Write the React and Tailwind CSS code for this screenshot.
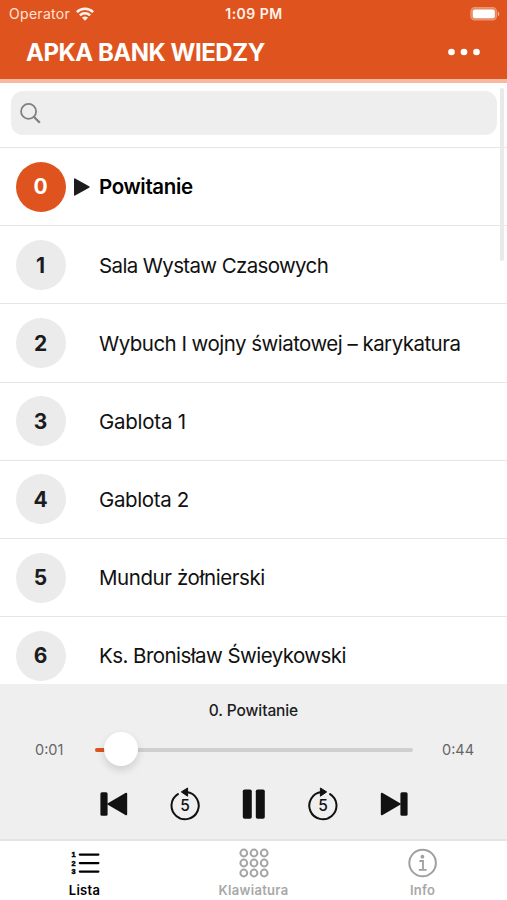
const tracks = [
  { id: 0, title: "Powitanie", spacing: "tracking-[-0.36px]" },
  { id: 1, title: "Sala Wystaw Czasowych", spacing: "tracking-[-0.64px]" },
  { id: 2, title: "Wybuch I wojny światowej – karykatura", spacing: "tracking-[-0.53px]" },
  { id: 3, title: "Gablota 1", spacing: "tracking-[-0.25px]" },
  { id: 4, title: "Gablota 2", spacing: "tracking-[-0.38px]" },
  { id: 5, title: "Mundur żołnierski", spacing: "tracking-[-0.42px]" },
  { id: 6, title: "Ks. Bronisław Świeykowski", spacing: "tracking-[-0.56px]" },
];

function WifiIcon() {
  return (
    <svg className="h-[14px] w-[18px]" viewBox="0 0 18 14" fill="none" stroke="#fff3ec" strokeWidth="2.6">
      <path d="M0.9 5.1a11.6 11.6 0 0 1 16.2 0" />
      <path d="M3.9 8.4a7.3 7.3 0 0 1 10.2 0" />
      <path d="M9 13.8 6 10.8a4.1 4.1 0 0 1 6 0z" fill="#fff3ec" stroke="none" />
    </svg>
  );
}

function BatteryIcon() {
  return (
    <svg className="h-[14px] w-[31px]" viewBox="0 0 31 14">
      <rect x="0.9" y="0.7" width="25.6" height="12.2" rx="3.8" fill="#e9855c" stroke="#eb9673" strokeWidth="1.2" />
      <rect x="2.8" y="2.4" width="22" height="8.8" rx="2" fill="#fff" />
      <path d="M27.9 4.4c1.9.8 1.9 4 0 4.8z" fill="#f3b294" />
    </svg>
  );
}

function Header() {
  return (
    <header className="h-[83px] shrink-0 border-b-4 border-[#f6b9a1] bg-[#df541e] text-white">
      <div className="grid h-7 grid-cols-3 items-center pl-[9px] pr-[6px] text-[14px] leading-none">
        <div className="flex items-center gap-[6px] text-[#ffe3d6]">
          <span className="tracking-[0.3px]">Operator</span>
          <WifiIcon />
        </div>
        <span className="pr-[2px] text-center text-[14px] font-semibold tracking-[0.5px] text-[#fff3ec]">1:09 PM</span>
        <div className="flex justify-end">
          <BatteryIcon />
        </div>
      </div>
      <div className="flex h-[49px] items-center justify-between pl-[26px] pr-[27px]">
        <h1 className="text-[24px] font-bold leading-none tracking-[-0.48px]">APKA BANK WIEDZY</h1>
        <svg className="-mt-0.5 h-2 w-8" viewBox="0 0 32 8" fill="#fff">
          <circle cx="3.5" cy="4" r="3.3" />
          <circle cx="16" cy="4" r="3.3" />
          <circle cx="28.5" cy="4" r="3.3" />
        </svg>
      </div>
    </header>
  );
}

function SearchBar() {
  return (
    <div className="h-[65px] border-b border-[#e6e6e6] pl-[11px] pr-[10px] pt-2">
      <div className="flex h-[44px] items-center rounded-[12px] bg-[#eeeeee] pl-[9px]">
        <svg className="h-[21px] w-[21px]" viewBox="0 0 21 21" fill="none" stroke="#808080">
          <circle cx="8.6" cy="8.4" r="7.5" strokeWidth="1.8" />
          <path d="m13.8 13.8 6 6" strokeWidth="2.3" />
        </svg>
      </div>
    </div>
  );
}

function TrackRow({ track, active }) {
  return (
    <li className="flex h-[78.2px] items-center border-b border-[#e6e6e6] pl-[15.5px]">
      <span
        className={`flex h-[50px] w-[50px] items-center justify-center rounded-full pt-px text-[21px] font-bold ${
          active ? "bg-[#df541e] text-white" : "bg-[#ebebeb] text-[#1c1c1e]"
        }`}
      >
        {track.id}
      </span>
      <span className="flex w-[33.5px] pl-2">
        {active && (
          <svg className="h-[18px] w-4" viewBox="0 0 16 18" fill="#1c1c1e">
            <path d="M0 1.2Q0 0 1.1.5l14 7.8q1 .7 0 1.4l-14 7.8Q0 18 0 16.8z" />
          </svg>
        )}
      </span>
      <span
        className={`pt-[2px] text-[20.5px] leading-none ${track.spacing} ${active ? "font-semibold text-black" : "text-[#111]"}`}
      >
        {track.title}
      </span>
    </li>
  );
}

function PrevIcon() {
  return (
    <svg className="h-6 w-7" viewBox="0 0 28 24" fill="#111">
      <rect x="0.4" y="0.2" width="7.2" height="23.6" rx="1.6" />
      <path d="M6.6 12 25.4 1q1.8-.8 1.8 1v20q0 1.8-1.8 1z" />
    </svg>
  );
}

function SeekIcon({ forward }) {
  return (
    <svg className="h-[34px] w-[30px]" viewBox="0 0 30 34">
      <g transform={forward ? "translate(30 0) scale(-1 1)" : undefined}>
        <path d="M16.5 5.1A13.6 13.6 0 1 1 7.9 7.1" fill="none" stroke="#111" strokeWidth="2" strokeLinecap="round" />
        <path d="M11.3 4.9 17.6 1v8.2z" fill="#111" stroke="#111" strokeLinejoin="round" />
      </g>
      <text x="15" y="24" textAnchor="middle" fontSize="15.5" fontWeight="500" fill="#111">
        5
      </text>
    </svg>
  );
}

function Player() {
  return (
    <section className="h-[157px] shrink-0 border-b-2 border-[#e4e4e4] bg-[#efefef]">
      <p className="pt-[18px] text-center text-[15.5px] font-medium leading-[18px] tracking-[-0.1px] text-[#1c1c1e]">
        0. Powitanie
      </p>
      <div className="mt-[13px] flex h-[34px] items-center text-[14.5px] text-[#666]">
        <span className="w-[95px] pl-[35px] pb-px">0:01</span>
        <div className="relative h-1 w-[318px] rounded-full bg-[#cfcfcf]">
          <div className="h-full w-7 rounded-full bg-[#df541e]" />
          <div className="absolute -top-4 left-[9px] h-[34px] w-[34px] rounded-full bg-white shadow-[0_4px_8px_rgba(0,0,0,0.14)]" />
        </div>
        <span className="pl-[29px] pb-px">0:44</span>
      </div>
      <div className="mt-[20px] flex h-[34px] items-center justify-between pl-[100px] pr-[99px]">
        <PrevIcon />
        <SeekIcon />
        <svg className="h-[30px] w-6" viewBox="0 0 24 30" fill="#111">
          <rect x="0.8" y="0.4" width="9" height="29.4" rx="1.8" />
          <rect x="13.8" y="0.4" width="9" height="29.4" rx="1.8" />
        </svg>
        <SeekIcon forward />
        <span className="-scale-x-100">
          <PrevIcon />
        </span>
      </div>
    </section>
  );
}

function TabBar() {
  return (
    <nav className="grid h-[59px] shrink-0 grid-cols-3 bg-white text-[13px] font-semibold leading-none text-[#a8a8a8]">
      <div className="flex flex-col items-center gap-[6px] pt-[7px] text-black">
        <svg className="h-[30px] w-[30px]" viewBox="0 0 30 30">
          <g
            className="font-['Liberation_Sans',sans-serif]"
            fontSize="7.3"
            fontWeight="700"
            fill="currentColor"
            stroke="currentColor"
            strokeWidth="0.5"
          >
            <text x="1.6" y="9.2">1</text>
            <text x="1.6" y="17.8">2</text>
            <text x="1.6" y="26.4">3</text>
          </g>
          <path d="M9.8 6.6h18.6M9.8 15.1h18.6M9.8 23.6h18.6" stroke="currentColor" strokeWidth="2.2" strokeLinecap="round" />
        </svg>
        <span className="tracking-[0.25px]">Lista</span>
      </div>
      <div className="flex flex-col items-center gap-[6px] pt-[7px]">
        <svg className="h-[30px] w-[30px]" viewBox="0 0 30 30" fill="none" stroke="#a5a5a5" strokeWidth="2">
          {[5, 15, 25].map((y) => [4.8, 15, 25.2].map((x) => <circle key={`${x}-${y}`} cx={x} cy={y} r="3.4" />))}
        </svg>
        <span className="tracking-[0.3px]">Klawiatura</span>
      </div>
      <div className="flex flex-col items-center gap-[6px] pt-[7px]">
        <svg className="h-[30px] w-[30px]" viewBox="0 0 30 30" fill="none" stroke="#a0a0a0" strokeWidth="2">
          <circle cx="14.6" cy="15" r="13.3" />
          <circle cx="14.4" cy="8.7" r="1.9" fill="#a0a0a0" stroke="none" />
          <path d="M11.5 13h3.5v8.8M10.8 21.8h7.8" strokeWidth="1.8" />
        </svg>
        <span className="tracking-[0.2px]">Info</span>
      </div>
    </nav>
  );
}

export default function App() {
  return (
    <div className="flex h-[900px] w-[507px] flex-col overflow-hidden bg-white font-['Inter',sans-serif]">
      <Header />
      <main className="relative h-[601px] shrink-0 overflow-hidden">
        <SearchBar />
        <ul>
          {tracks.map((track) => (
            <TrackRow key={track.id} track={track} active={track.id === 0} />
          ))}
        </ul>
        {/* scroll indicator */}
        <div className="absolute right-[3px] top-[5px] h-[173px] w-[4px] rounded-full bg-[#e9e9e9]" />
      </main>
      <Player />
      <TabBar />
    </div>
  );
}
